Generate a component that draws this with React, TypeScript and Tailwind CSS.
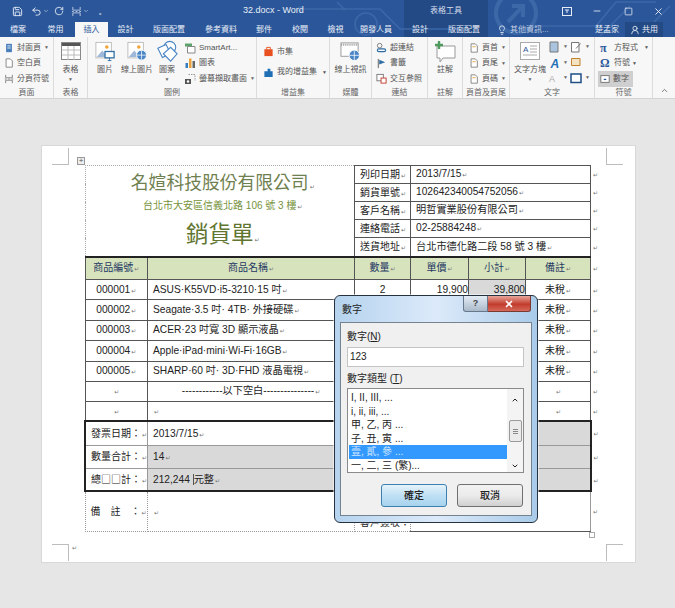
import { ChevronDown, ChevronUp, Lightbulb, Minus, RotateCw, Save, Square, Undo2, UserRound, X } from 'lucide-react';
import type { ReactNode } from 'react';

const tabs = [
  { label: '檔案', w: 'w-[36px]' },
  { label: '常用', w: 'w-[39px]' },
  { label: '插入', w: 'w-[33px]', active: true },
  { label: '設計', w: 'w-[35px]' },
  { label: '版面配置', w: 'w-[52px]' },
  { label: '參考資料', w: 'w-[52px]' },
  { label: '郵件', w: 'w-[34px]' },
  { label: '校閱', w: 'w-[38px]' },
  { label: '檢視', w: 'w-[33px]' },
  { label: '開發人員', w: 'w-[48px]' },
  { label: '設計', w: 'w-[40px]' },
  { label: '版面配置', w: 'w-[48px]' },
];

const products: { id: string; name: string; qty?: string; price?: string; sum?: string }[] = [
  { id: '000001', name: 'ASUS·K55VD·i5-3210·15 吋', qty: '2', price: '19,900', sum: '39,800' },
  { id: '000002', name: 'Seagate·3.5 吋· 4TB· 外接硬碟' },
  { id: '000003', name: 'ACER·23 吋寬 3D 顯示液晶' },
  { id: '000004', name: 'Apple·iPad·mini·Wi-Fi·16GB' },
  { id: '000005', name: 'SHARP·60 吋· 3D·FHD 液晶電視' },
];

const infoRows = [
  ['列印日期', '2013/7/15'],
  ['銷貨單號', '102642340054752056'],
  ['客戶名稱', '明哲實業股份有限公司'],
  ['連絡電話', '02-25884248'],
  ['送貨地址', '台北市德化路二段 58 號 3 樓'],
];

const numberTypes = ['I, II, III, ...', 'i, ii, iii, ...', '甲, 乙, 丙 ...', '子, 丑, 寅 ...', '壹, 貳, 參 ...', '一, 二, 三 (繁)...'];

function Mark() {
  return <span className="ml-[1px] font-['DejaVu_Sans',sans-serif] text-[6px] font-normal leading-none text-[#777]">↵</span>;
}

function Icon({ children, size = 12 }: { children: ReactNode; size?: number }) {
  return (
    <svg width={size} height={size} viewBox="0 0 24 24" className="shrink-0">
      {children}
    </svg>
  );
}

function PageIcon() {
  return <path d="M5 2h10l5 5v15H5z" fill="#fff" stroke="#777" strokeWidth="2" />;
}

function SmallBtn({ icon, text, caret, className = '' }: { icon: ReactNode; text: string; caret?: boolean; className?: string }) {
  return (
    <div className={`flex h-[15.5px] shrink-0 items-center gap-[3px] whitespace-nowrap text-[8px] ${className}`}>
      {icon}
      <span>{text}</span>
      {caret && <span className="text-[5px] text-[#666]">▼</span>}
    </div>
  );
}

function BigBtn({ icon, text, caret, className = '' }: { icon: ReactNode; text: string; caret?: boolean; className?: string }) {
  return (
    <div className={`flex flex-col items-center whitespace-nowrap text-[8px] leading-[11px] ${className}`}>
      <div className="flex h-[22px] shrink-0 items-center">{icon}</div>
      <span className="mt-[2px]">{text}</span>
      {caret && <span className="text-[5px] leading-[8px] text-[#666]">▼</span>}
    </div>
  );
}

function Group({ label, width, children, className = '' }: { label: string; width: string; children: ReactNode; className?: string }) {
  return (
    <div className={`flex h-full shrink-0 flex-col border-r border-[#dcdcdc] ${width}`}>
      <div className={`flex min-h-0 flex-1 ${className}`}>{children}</div>
      <div className="h-[11px] whitespace-nowrap text-center text-[8px] leading-[11px] text-[#666]">{label}</div>
    </div>
  );
}

function Header() {
  return (
    <div className="relative h-[37px] overflow-hidden bg-[#2b579a] text-[#e8eef7]">
      <div className="absolute left-[404px] top-0 h-[37px] w-[84px] bg-[#234a85]" />
      <svg className="absolute inset-0" width="675" height="37" fill="none" stroke="#3d68a8" strokeWidth="1.5">
        <circle cx="366" cy="24" r="11" />
        <circle cx="516" cy="13" r="20" strokeWidth="4" />
        <path d="M508 22l15-16M512 6h11v11" strokeWidth="4" />
        <path d="M300 9h80l20 20h60M345 10l-8-8M536 26h60l20-24h40M600 36l30-30M640 36l30-30" />
        <circle cx="300" cy="9" r="2" />
      </svg>
      <div className="relative flex h-[22px] items-center">
        <div className="flex w-[243px] items-center">
          <Save size={11} className="ml-[12px]" />
          <Undo2 size={11} className="ml-[8px]" />
          <ChevronDown size={6} className="ml-[1px]" />
          <RotateCw size={10} className="ml-[5px]" />
          <div className="ml-[7px]">
            <Icon size={11}>
              <path d="M4 2v7h16V2M4 22v-7h16v7M2 12h4M10 12h4M18 12h4" fill="none" stroke="#dfe7f2" strokeWidth="1.6" />
            </Icon>
          </div>
          <ChevronDown size={6} className="ml-[1px]" />
          <span className="ml-[10px] text-[7px] leading-none">₌</span>
        </div>
        <div className="w-[70px] whitespace-nowrap text-[9px]">32.docx - Word</div>
        <div className="ml-[113px] w-[40px] whitespace-nowrap text-center text-[8px] text-[#d5deec]">表格工具</div>
        <div className="ml-[87px] flex w-[28px] justify-center">
          <svg width="10" height="9" viewBox="0 0 10 9" fill="none" stroke="#e8eef7">
            <rect x=".5" y=".5" width="9" height="8" />
            <path d="M3 3h4M5 3v3" />
          </svg>
        </div>
        <Minus size={10} className="ml-[11px]" />
        <Square size={9} className="ml-[22px]" />
        <X size={11} className="ml-[20px]" />
      </div>
      <div className="relative flex h-[15px] items-end text-[8px]">
        {tabs.map((tab, i) => (
          <div
            key={i}
            className={`flex h-[15px] items-center justify-center ${tab.w} ${tab.active ? 'bg-[#f7f7f7] text-[#2b579a]' : ''}`}
          >
            {tab.label}
          </div>
        ))}
        <Lightbulb size={10} className="mb-[2px] ml-[9px]" />
        <span className="mb-[1px] ml-[3px] w-[40px] whitespace-nowrap text-[#c3d0e4]">其他資訊...</span>
        <span className="mb-[1px] ml-[45px] w-[24px] whitespace-nowrap">楚孟家</span>
        <div className="ml-[6px] flex h-[15px] w-[38px] items-center justify-center gap-[2px] bg-[#234a85]">
          <UserRound size={10} />
          共用
        </div>
      </div>
    </div>
  );
}

function Ribbon() {
  return (
    <div className="flex h-[62px] border-b border-[#d4d4d4] bg-[#f7f7f7] text-[#555]">
      <Group label="頁面" width="w-[54px]" className="flex-col pl-[4px] pt-[3px]">
        <SmallBtn text="封面頁" caret icon={<Icon size={10}><path d="M5 2h14v20H5z" fill="#4a7ebb" /><path d="M8 7h8M8 12h8" stroke="#fff" strokeWidth="2" /></Icon>} />
        <SmallBtn text="空白頁" icon={<Icon size={10}><PageIcon /></Icon>} />
        <SmallBtn text="分頁符號" icon={<Icon size={10}><path d="M4 2v7h16V2M4 22v-7h16v7M2 12h4M10 12h4M18 12h4" fill="none" stroke="#777" strokeWidth="2" /></Icon>} />
      </Group>
      <Group label="表格" width="w-[34px]" className="justify-center pt-[3px]">
        <BigBtn
          text="表格"
          caret
          icon={
            <svg width="20" height="18" viewBox="0 0 20 18">
              <rect x=".5" y=".5" width="19" height="17" fill="#fff" stroke="#888" />
              <rect x="1" y="1" width="18" height="3" fill="#555" />
              <path d="M1 8h18M1 13h18M7 4v14M13 4v14" stroke="#bbb" />
            </svg>
          }
        />
      </Group>
      <Group label="圖例" width="w-[169px]" className="pt-[3px]">
        <BigBtn
          text="圖片"
          className="w-[34px]"
          icon={
            <svg width="20" height="21" viewBox="0 0 22 22">
              <rect x="1" y="1" width="17" height="17" fill="#fff" stroke="#bbb" />
              <circle cx="13" cy="6" r="2" fill="#f2a33a" />
              <path d="M2 17l6-7 6 7z" fill="#9db8d8" />
              <rect x="11" y="11" width="10" height="7" fill="#fff" stroke="#2f6ea5" strokeWidth="1.4" />
              <path d="M14 21h4M16 18v3" stroke="#2f6ea5" />
            </svg>
          }
        />
        <BigBtn
          text="線上圖片"
          className="w-[30px]"
          icon={
            <svg width="20" height="21" viewBox="0 0 22 22">
              <rect x="1" y="1" width="17" height="17" fill="#fff" stroke="#bbb" />
              <circle cx="13" cy="6" r="2" fill="#f2a33a" />
              <path d="M2 17l6-7 6 7z" fill="#9db8d8" />
              <circle cx="16" cy="15" r="5.5" fill="#4a86c5" stroke="#fff" />
              <path d="M11 15h10M16 10v10" stroke="#fff" strokeWidth=".8" />
            </svg>
          }
        />
        <BigBtn
          text="圖案"
          caret
          className="w-[30px]"
          icon={
            <svg width="22" height="22" viewBox="0 0 24 24" fill="#fff" stroke="#4a86c5" strokeWidth="1.2">
              <circle cx="15" cy="8" r="6.5" />
              <path d="M2 9l9-4 5 10-9 4z" />
              <path d="M8 15l8 8 7-8-7-7z" />
            </svg>
          }
        />
        <div className="ml-[2px] flex flex-col">
          <SmallBtn text="SmartArt..." className="gap-[1px]" icon={<Icon size={12}><path d="M2 3h14v6H2z" fill="#5aa469" /><path d="M7 9h15v13H7z" fill="#fff" stroke="#888" strokeWidth="2" /></Icon>} />
          <SmallBtn text="圖表" className="gap-[1px]" icon={<Icon size={12}><path d="M3 12h5v10H3z" fill="#3a7dbf" /><path d="M10 3h5v19h-5z" fill="#e8a33a" /><path d="M17 8h5v14h-5z" fill="#666" /></Icon>} />
          <SmallBtn text="螢幕擷取畫面" className="gap-[1px]" caret icon={<Icon size={12}><path d="M9 3h13v13" fill="none" stroke="#999" strokeWidth="2" strokeDasharray="3 2" /><path d="M2 12h12v10H2z" fill="#555" /><circle cx="8" cy="17" r="2.5" fill="#fff" /></Icon>} />
        </div>
      </Group>
      <Group label="增益集" width="w-[73px]" className="flex-col gap-[5px] pl-[6px] pt-[7px]">
        <SmallBtn text="市集" icon={<Icon size={11}><path d="M3 7h18v15H3z" fill="#e8501f" /><path d="M8 7V3h8v4" fill="none" stroke="#e8501f" strokeWidth="2" /></Icon>} />
        <div className="flex items-center">
          <SmallBtn text="我的增益集" icon={<Icon size={11}><path d="M3 9h7V4h6v5h5v13H3z" fill="#1f6fb5" /></Icon>} />
          <span className="ml-[5px] text-[5px]">▼</span>
        </div>
      </Group>
      <Group label="媒體" width="w-[42px]" className="justify-center pt-[3px]">
        <BigBtn
          text="線上視訊"
          icon={
            <svg width="21" height="21" viewBox="0 0 22 22">
              <rect x="1" y="2" width="18" height="14" fill="#fff" stroke="#999" />
              <path d="M1 4h18" stroke="#999" strokeDasharray="1 1" strokeWidth="2" />
              <circle cx="15" cy="15" r="5.5" fill="#4a86c5" stroke="#fff" />
              <path d="M10 15h10M15 10v10" stroke="#fff" strokeWidth=".8" />
            </svg>
          }
        />
      </Group>
      <Group label="連結" width="w-[56px]" className="flex-col pl-[4px] pt-[3px]">
        <SmallBtn text="超連結" icon={<Icon size={11}><circle cx="8" cy="8" r="5" fill="none" stroke="#777" strokeWidth="2" /><rect x="3" y="15" width="18" height="6" rx="3" fill="none" stroke="#2f6ea5" strokeWidth="2.5" /></Icon>} />
        <SmallBtn text="書籤" icon={<Icon size={11}><path d="M5 2v20" stroke="#555" strokeWidth="2" /><path d="M7 4l13 5-13 5z" fill="#2f6ea5" /></Icon>} />
        <SmallBtn text="交互參照" icon={<Icon size={11}><rect x="2" y="3" width="14" height="14" fill="#fff" stroke="#777" strokeWidth="2" /><rect x="11" y="11" width="11" height="11" fill="#fff" stroke="#c0392b" strokeWidth="2" /></Icon>} />
      </Group>
      <Group label="註解" width="w-[35px]" className="justify-center pt-[3px]">
        <BigBtn
          text="註解"
          icon={
            <svg width="22" height="22" viewBox="0 0 22 22">
              <path d="M3 6h18v12H9l-3 4v-4H3z" fill="#fff" stroke="#999" />
              <path d="M5 1v8M1 5h8" stroke="#4f9b5f" strokeWidth="2.4" />
            </svg>
          }
        />
      </Group>
      <Group label="頁首及頁尾" width="w-[47px]" className="flex-col pl-[6px] pt-[3px]">
        {['頁首', '頁尾', '頁碼'].map((t) => (
          <SmallBtn key={t} text={t} caret icon={<Icon size={10}><PageIcon /><path d="M8 9h8" stroke="#e0a030" strokeWidth="2" /></Icon>} />
        ))}
      </Group>
      <Group label="文字" width="w-[85px]" className="pl-[2px] pt-[3px]">
        <BigBtn
          text="文字方塊"
          caret
          className="w-[36px]"
          icon={
            <svg width="20" height="18" viewBox="0 0 20 18">
              <rect x=".5" y=".5" width="19" height="17" fill="#fff" stroke="#aaa" />
              <text x="3" y="10" fontSize="8" fill="#2b579a" fontFamily="Liberation Sans">A</text>
              <path d="M10 4h7M10 7h7M10 10h7M3 13h14" stroke="#aaa" />
            </svg>
          }
        />
        <div className="flex flex-col gap-[1.5px]">
          {[
            <path key="a" d="M4 2h16v20H4z" fill="#aac4e0" stroke="#777" strokeWidth="2" />,
            <text key="b" x="5" y="21" fontSize="24" fontWeight="bold" fontStyle="italic" fill="#1f6fb5" fontFamily="Liberation Sans">A</text>,
            <text key="c" x="2" y="20" fontSize="18" fill="#aaa" fontFamily="Liberation Sans">A</text>,
          ].map((glyph, i) => (
            <div key={i} className="flex h-[14px] items-center gap-[3px]">
              <Icon size={12}>{glyph}</Icon>
              <span className="text-[5px] text-[#666]">▼</span>
            </div>
          ))}
        </div>
        <div className="ml-[2px] flex flex-col gap-[1.5px]">
          {[
            <path key="a" d="M3 3h15v19H3zM12 15l9-10" fill="#fff" stroke="#777" strokeWidth="2" />,
            <path key="b" d="M3 3h17v14H3z" fill="#f4e3c0" stroke="#c08030" strokeWidth="2" />,
            <path key="c" d="M2 4h20v17H2z" fill="#fff" stroke="#1f4f85" strokeWidth="3" />,
          ].map((glyph, i) => (
            <div key={i} className="flex h-[14px] items-center gap-[3px]">
              <Icon size={12}>{glyph}</Icon>
              {i !== 1 && <span className="text-[5px] text-[#666]">▼</span>}
            </div>
          ))}
        </div>
      </Group>
      <Group label="符號" width="w-[58px]" className="flex-col pl-[3px] pt-[3px]">
        <div className="flex h-[15.5px] items-center text-[8px]">
          <span className="ml-[2px] w-[14px] font-['Liberation_Serif',serif] text-[12px] font-bold leading-none text-[#2b579a]">π</span>
          方程式
          <span className="ml-[6px] text-[5px]">▼</span>
        </div>
        <div className="flex h-[15.5px] items-center text-[8px]">
          <span className="ml-[2px] w-[14px] font-['Liberation_Serif',serif] text-[12px] font-bold leading-none text-[#2b579a]">Ω</span>
          符號
          <span className="ml-[2px] text-[5px]">▼</span>
        </div>
        <div className="flex h-[15.5px] w-[35px] items-center gap-[3px] bg-[#cfcfcf] pl-[2px] text-[8px]">
          <Icon size={10}><rect x="2" y="4" width="20" height="16" fill="#fff" stroke="#666" strokeWidth="2" /><path d="M9 13h6" stroke="#2b579a" strokeWidth="3" /></Icon>
          數字
        </div>
      </Group>
      <div className="flex flex-1 items-end justify-center pb-[3px]">
        <ChevronUp size={9} />
      </div>
    </div>
  );
}

function Dialog() {
  return (
    <div className="absolute left-[292px] top-[149px] flex h-[228px] w-[204px] flex-col rounded-[6px] border border-[#26323f] bg-[linear-gradient(90deg,#b5d3ee,#dceafa_50%,#a9cbe9)] px-[5px] pb-[6px] text-[#222] shadow-[0_0_0_1px_rgba(255,255,255,0.5)]">
      <div className="relative flex h-[26px] shrink-0 items-center pl-[2px] text-[10px]">
        數字
        <div className="absolute right-[1px] top-0 flex h-[16px]">
          <div className="flex w-[25px] items-center justify-center rounded-bl-[3px] border border-t-0 border-[#66788c] bg-[linear-gradient(#e3ecf5,#aab9c9)] text-[9px] font-bold text-[#444]">?</div>
          <div className="flex w-[43px] items-center justify-center rounded-br-[3px] border border-l-0 border-t-0 border-[#7a3a32] bg-[linear-gradient(#e8a59b,#c23c2c_55%,#d4695a)] text-white">
            <X size={10} strokeWidth={4} />
          </div>
        </div>
      </div>
      <div className="flex flex-1 flex-col border border-[#76838f] bg-[#f0f0f0] pl-[6px] pr-[7px] pt-[7px] text-[10px]">
        <div className="h-[17px] leading-[14px]">數字(<u>N</u>)</div>
        <div className="h-[20px] border border-[#c4c4c4] bg-white pl-[2px] text-[10px] leading-[18px]">123</div>
        <div className="mt-[4px] h-[17px] leading-[16px]">數字類型 (<u>T</u>)</div>
        <div className="flex h-[85px] border border-[#8a8a8a] bg-white">
          <div className="flex-1 pl-[1px] pt-[2px]">
            {numberTypes.map((t, i) => (
              <div key={t} className={`h-[13.5px] whitespace-nowrap pl-[2px] text-[10px] leading-[13px] ${i === 4 ? 'bg-[#3399ff] text-[#cfe6ff]' : ''}`}>
                {t}
              </div>
            ))}
          </div>
          <div className="flex w-[16px] flex-col items-center bg-[#f4f4f4] pt-[7px]">
            <ChevronUp size={8} strokeWidth={3} />
            <div className="mt-[16px] flex h-[22px] w-[13px] flex-col items-center justify-center gap-[1px] rounded-[2px] border border-[#9a9a9a] bg-[#ebebeb]">
              <span className="h-px w-[5px] bg-[#888]" />
              <span className="h-px w-[5px] bg-[#888]" />
              <span className="h-px w-[5px] bg-[#888]" />
            </div>
            <ChevronDown size={8} strokeWidth={3} className="mt-[20px]" />
          </div>
        </div>
        <div className="mr-[1px] mt-[11px] flex justify-end gap-[10px] font-medium">
          <div className="flex h-[23px] w-[66px] items-center justify-center rounded-[3px] border border-[#3c7fb1] bg-[linear-gradient(#e5f3fb,#bfe0f4_50%,#a7d3ee)]">確定</div>
          <div className="flex h-[23px] w-[66px] items-center justify-center rounded-[3px] border border-[#707070] bg-[linear-gradient(#f2f2f2,#ebebeb_50%,#cfcfcf)]">取消</div>
        </div>
      </div>
    </div>
  );
}

const solid = 'border border-[#555]';
const headCell = 'border border-[#555] bg-[#d6e3bc] text-center text-[10px] text-[#1f3864]';

function InvoiceTable() {
  return (
    <table className="table-fixed border-collapse text-[10.2px] leading-none text-[#222]">
      <colgroup>
        <col className="w-[60px]" />
        <col className="w-[207px]" />
        <col className="w-[55px]" />
        <col className="w-[58px]" />
        <col className="w-[57px]" />
        <col className="w-[65px]" />
        <col className="w-[14px]" />
      </colgroup>
      <tbody>
        {infoRows.map((row, i) => (
          <tr key={row[0]} className={i === 4 ? 'h-[19px]' : 'h-[18px]'}>
            {i === 0 && (
              <td rowSpan={5} colSpan={2} className="border-l border-t border-dotted border-[#aaa] pl-[6px] pt-[4px] text-center align-top text-[#6f8050]">
                <div className="text-[17.8px] leading-[26px]">名媗科技股份有限公司<Mark /></div>
                <div className="mt-[3px] text-[10px] leading-[14px] text-[#76923c]">台北市大安區信義北路 106 號 3 樓<Mark /></div>
                <div className="mt-[7px] text-[22.5px] leading-[30px] text-[#5f7530]">銷貨單<Mark /></div>
              </td>
            )}
            <td className={`${solid} pl-[5px] text-[10px]`}>{row[0]}<Mark /></td>
            <td colSpan={3} className={`${solid} pl-[5px]`}>{row[1]}<Mark /></td>
            <td className="pl-[1px]"><Mark /></td>
          </tr>
        ))}
        <tr className="h-[23px]">
          {['商品編號', '商品名稱', '數量', '單價', '小計', '備註'].map((h) => (
            <td key={h} className={`${headCell} border-t-[2px] border-t-[#222]`}>{h}<Mark /></td>
          ))}
          <td className="pl-[1px]"><Mark /></td>
        </tr>
        {products.map((p) => (
          <tr key={p.id} className="h-[20.4px]">
            <td className={`${solid} text-center`}>{p.id}<Mark /></td>
            <td className={`${solid} pl-[5px]`}>{p.name}<Mark /></td>
            <td className={`${solid} text-center`}>{p.qty}</td>
            <td className={`${solid} text-right`}>{p.price}</td>
            <td className={`${solid} text-right ${p.sum ? 'bg-[#d9d9d9]' : ''}`}>{p.sum}</td>
            <td className={`${solid} text-center text-[10px]`}>未稅<Mark /></td>
            <td className="pl-[1px]"><Mark /></td>
          </tr>
        ))}
        <tr className="h-[20px]">
          <td className={`${solid} text-center`}><Mark /></td>
          <td className={`${solid} text-center`}>------------以下空白---------------<Mark /></td>
          <td className={solid} /><td className={solid} /><td className={solid} />
          <td className={`${solid} text-center`}><Mark /></td>
          <td className="pl-[1px]"><Mark /></td>
        </tr>
        <tr className="h-[20px]">
          <td className={`${solid} text-center`}><Mark /></td>
          <td className={`${solid} pl-[5px]`}><Mark /></td>
          <td className={solid} /><td className={solid} /><td className={solid} />
          <td className={`${solid} text-center`}><Mark /></td>
          <td className="pl-[1px]"><Mark /></td>
        </tr>
        <tr className="h-[24px]">
          <td className="whitespace-nowrap border-b border-l-[2px] border-r border-t-[2px] border-b-[#999] border-l-[#222] border-r-[#999] border-t-[#222] border-b-dotted border-r-dotted pl-[5px] text-[10px]">發票日期：<Mark /></td>
          <td colSpan={2} className="border-b border-t-[2px] border-b-[#999] border-t-[#222] border-b-dotted pl-[5px]">2013/7/15<Mark /></td>
          <td colSpan={3} className="border-b border-r-[2px] border-t-[2px] border-b-[#999] border-r-[#222] border-t-[#222] border-b-dotted bg-[#d9d9d9]" />
          <td className="pl-[1px]"><Mark /></td>
        </tr>
        <tr className="h-[23px]">
          <td className="whitespace-nowrap border-b border-l-[2px] border-r border-b-[#999] border-l-[#222] border-r-[#999] border-b-dotted border-r-dotted pl-[5px] text-[10px]">數量合計：<Mark /></td>
          <td colSpan={5} className="border-b border-r-[2px] border-b-[#999] border-r-[#222] border-b-dotted bg-[#d9d9d9] pl-[5px]">14<Mark /></td>
          <td className="pl-[1px]"><Mark /></td>
        </tr>
        <tr className="h-[23px]">
          <td className="whitespace-nowrap border-b-[2px] border-l-[2px] border-r border-b-[#222] border-l-[#222] border-r-[#999] border-r-dotted pl-[5px] text-[10px]">總<span className="font-['Noto_Sans_CJK_TC',sans-serif]">□□</span>計：<Mark /></td>
          <td colSpan={5} className="border-b-[2px] border-r-[2px] border-b-[#222] border-r-[#222] bg-[#d9d9d9] pl-[5px]">
            212,244 <span className="border-l border-[#555]">元整</span><Mark />
          </td>
          <td className="pl-[1px]"><Mark /></td>
        </tr>
        <tr className="h-[40px]">
          <td className="whitespace-nowrap border-b border-l border-r border-dotted border-[#999] pl-[5px] text-[10px]">
            <span className="tracking-[10px]">備註</span>：<Mark />
          </td>
          <td className="border-b border-r border-dotted border-[#999] pl-[5px]"><Mark /></td>
          <td className="whitespace-nowrap border-b border-r border-dotted border-[#999] pb-[3px] pl-[5px] align-bottom text-[10px]">客戶簽收：</td>
          <td colSpan={3} className="border-b border-r border-b-[#555] border-r-[#999] border-r-dotted" />
          <td className="pl-[1px]"><Mark /></td>
        </tr>
      </tbody>
    </table>
  );
}

function Crop({ className }: { className: string }) {
  return <div className={`absolute h-[17px] w-[17px] border-[#bdbdbd] ${className}`} />;
}

export default function App() {
  return (
    <div className="h-[608px] w-[675px] overflow-hidden bg-[#e6e6e6] font-['Liberation_Sans','Noto_Sans_CJK_TC',sans-serif]">
      <Header />
      <Ribbon />
      <div className="relative ml-[41px] mt-[46px] h-[418px] w-[595px] border border-[#d8d8d8] bg-white pl-[42px] pt-[19px]">
        <Crop className="left-[10px] top-[2px] border-b border-r" />
        <Crop className="left-[564px] top-[2px] border-b border-l" />
        <Crop className="left-[10px] top-[398px] border-r border-t" />
        <Crop className="left-[564px] top-[398px] border-l border-t" />
        <div className="absolute left-[35px] top-[11px] flex h-[8px] w-[8px] items-center justify-center border border-[#999] bg-[#eee] text-[8px] leading-none text-[#555]">+</div>
        <div className="absolute left-[547px] top-[386px] h-[6px] w-[6px] border border-[#aaa]" />
        <div className="absolute left-[29px] top-[391px] leading-none"><Mark /></div>
        <InvoiceTable />
        <Dialog />
      </div>
    </div>
  );
}
